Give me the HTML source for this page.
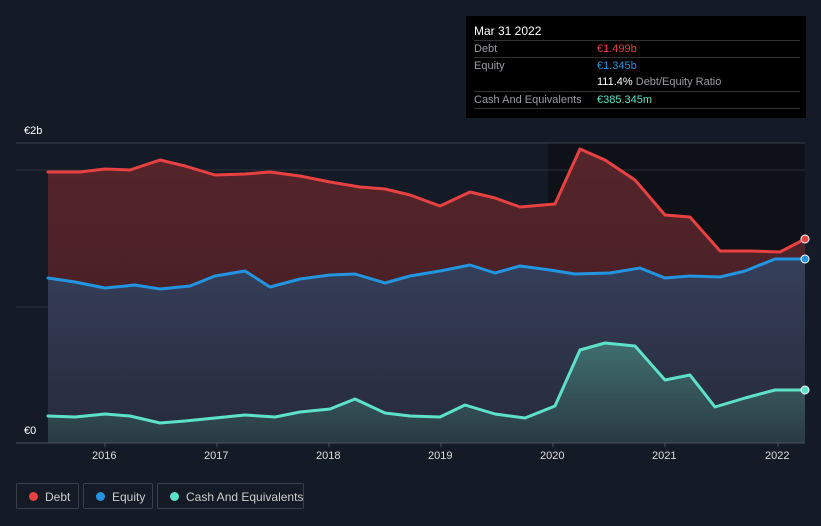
<!DOCTYPE html>
<html><head><meta charset="utf-8"><style>
body{margin:0;width:821px;height:526px;background:#151b26;font-family:"Liberation Sans",sans-serif;overflow:hidden;position:relative}
.tt{position:absolute;left:466px;top:16px;width:340px;height:102px;background:#000;color:#fff;font-size:11px}
.tt .r{position:absolute;left:8px;right:6px;border-top:1px solid #333;height:16px;line-height:16px}
.l{color:#9a9da3}
.v{position:absolute;left:123px;top:0}
.lg{position:absolute;top:483px;height:26px;border:1px solid #3a404b;border-radius:2px;color:#ccc;font-size:12px;line-height:26px;box-sizing:border-box;white-space:nowrap}
.lg i{position:absolute;left:12px;top:8px;width:9px;height:9px;border-radius:50%}
.lg span{position:absolute;left:28px}
.ax{position:absolute;top:450px;color:#ddd;font-size:11px}
</style></head><body>
<svg width="821" height="526" style="position:absolute;left:0;top:0">
<defs>
<linearGradient id="gd" x1="0" y1="0" x2="0" y2="1"><stop offset="0" stop-color="#55252b"/><stop offset="1" stop-color="#3e1c22"/></linearGradient>
<linearGradient id="ge" x1="0" y1="0" x2="0" y2="1"><stop offset="0" stop-color="#363f5a"/><stop offset="1" stop-color="#262a3a"/></linearGradient>
<linearGradient id="gc" x1="0" y1="0" x2="0" y2="1"><stop offset="0" stop-color="#3f6e6e"/><stop offset="1" stop-color="#2a3a44"/></linearGradient>
</defs>
<rect x="548" y="143" width="257" height="300" fill="#0e1117"/>
<line x1="16" y1="143" x2="805" y2="143" stroke="#3a3f48"/>
<line x1="16" y1="170" x2="805" y2="170" stroke="#2a2f38"/>
<polygon fill="url(#gd)" points="48,443 48,172 80,172 105,169 130,170 160,160 185,166 215,175 245,174 270,172 300,176 330,182 360,187 385,189 410,195 440,206 470,192 495,198 520,207 555,204 580,149 605,160 635,180 665,215 690,217 720,251 750,251 780,252 805,239 805,443"/>
<polygon fill="url(#ge)" points="48,443 48,278 75,282 105,288 135,285 160,289 190,286 215,276 245,271 270,287 300,279 330,275 355,274 385,283 410,276 440,271 470,265 495,273 520,266 550,270 575,274 610,273 640,268 665,278 690,276 720,277 745,271 775,259 805,259 805,443"/>
<line x1="16" y1="307" x2="805" y2="307" stroke="#3a3f50" stroke-opacity=".6"/>
<polygon fill="url(#gc)" points="48,443 48,416 75,417 105,414 130,416 160,423 185,421 215,418 245,415 275,417 300,412 330,409 355,399 385,413 410,416 440,417 465,405 495,414 525,418 555,406 580,350 605,343 635,346 665,380 690,375 715,407 745,398 775,390 805,390 805,443"/>
<g fill="none" stroke-width="3" stroke-linejoin="round" stroke-linecap="round">
<polyline stroke="#e84142" points="48,172 80,172 105,169 130,170 160,160 185,166 215,175 245,174 270,172 300,176 330,182 360,187 385,189 410,195 440,206 470,192 495,198 520,207 555,204 580,149 605,160 635,180 665,215 690,217 720,251 750,251 780,252 805,239"/>
<polyline stroke="#2394df" points="48,278 75,282 105,288 135,285 160,289 190,286 215,276 245,271 270,287 300,279 330,275 355,274 385,283 410,276 440,271 470,265 495,273 520,266 550,270 575,274 610,273 640,268 665,278 690,276 720,277 745,271 775,259 805,259"/>
<polyline stroke="#5de2c9" points="48,416 75,417 105,414 130,416 160,423 185,421 215,418 245,415 275,417 300,412 330,409 355,399 385,413 410,416 440,417 465,405 495,414 525,418 555,406 580,350 605,343 635,346 665,380 690,375 715,407 745,398 775,390 805,390"/>
</g>
<circle cx="805" cy="239" r="4" fill="#e84142" stroke="#fff"/>
<circle cx="805" cy="259" r="4" fill="#2394df" stroke="#fff"/>
<circle cx="805" cy="390" r="4" fill="#5de2c9" stroke="#fff"/>
<rect x="16" y="420" width="32" height="23" fill="#151b26"/>
<line x1="16" y1="443" x2="805" y2="443" stroke="#4a505a"/>
<g stroke="#4a505a"><line x1="105" y1="443" x2="105" y2="447"/><line x1="217" y1="443" x2="217" y2="447"/><line x1="329" y1="443" x2="329" y2="447"/><line x1="441" y1="443" x2="441" y2="447"/><line x1="553" y1="443" x2="553" y2="447"/><line x1="665" y1="443" x2="665" y2="447"/><line x1="778" y1="443" x2="778" y2="447"/></g>
</svg>
<div style="position:absolute;left:24px;top:125px;color:#fff;font-size:11px">€2b</div>
<div style="position:absolute;left:24px;top:425px;color:#fff;font-size:11px">€0</div>
<div class="ax" style="left:92px">2016</div><div class="ax" style="left:204px">2017</div><div class="ax" style="left:316px">2018</div><div class="ax" style="left:428px">2019</div><div class="ax" style="left:540px">2020</div><div class="ax" style="left:652px">2021</div><div class="ax" style="left:765px">2022</div>
<div class="tt">
<div style="position:absolute;left:8px;top:8px;font-size:12px">Mar 31 2022</div>
<div class="r" style="top:24px"><span class="l">Debt</span><span class="v" style="color:#e84142">€1.499b</span></div>
<div class="r" style="top:41px"><span class="l">Equity</span><span class="v" style="color:#2394df">€1.345b</span></div>
<div class="r" style="top:58px;border-top:none"><span class="v"><b style="font-weight:normal;color:#fff">111.4%</b> <span class="l">Debt/Equity Ratio</span></span></div>
<div class="r" style="top:75px;border-bottom:1px solid #333"><span class="l">Cash And Equivalents</span><span class="v" style="color:#5de2c9">€385.345m</span></div>
</div>
<div class="lg" style="left:16px;width:63px"><i style="background:#e84142"></i><span>Debt</span></div>
<div class="lg" style="left:83px;width:70px"><i style="background:#2394df"></i><span>Equity</span></div>
<div class="lg" style="left:157px;width:147px"><i style="background:#5de2c9"></i><span>Cash And Equivalents</span></div>
</body></html>
